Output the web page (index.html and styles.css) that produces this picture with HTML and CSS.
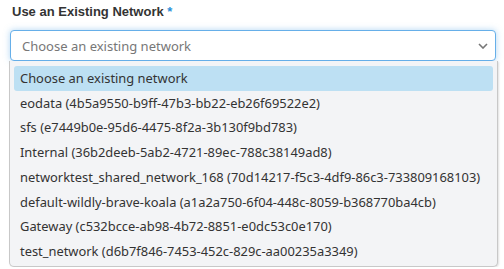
FILE: index.html
```html
<!DOCTYPE html>
<html>
<head>
<meta charset="utf-8">
<link rel="stylesheet" href="styles.css">
</head>
<body>
<div class="field">
  <label class="label">Use an Existing Network <span class="req">*</span></label>
  <div class="select">
    <span class="placeholder">Choose an existing network</span>
    <svg class="chev" width="10" height="6" viewBox="0 0 10 6"><path d="M1 1 L5 5 L9 1" fill="none" stroke="#777" stroke-width="1.6"/></svg>
  </div>
  <ul class="menu">
    <li class="item active">Choose an existing network</li>
    <li class="item">eodata (4b5a9550-b9ff-47b3-bb22-eb26f69522e2)</li>
    <li class="item">sfs (e7449b0e-95d6-4475-8f2a-3b130f9bd783)</li>
    <li class="item">Internal (36b2deeb-5ab2-4721-89ec-788c38149ad8)</li>
    <li class="item">networktest_shared_network_168 (70d14217-f5c3-4df9-86c3-733809168103)</li>
    <li class="item">default-wildly-brave-koala (a1a2a750-6f04-448c-8059-b368770ba4cb)</li>
    <li class="item">Gateway (c532bcce-ab98-4b72-8851-e0dc53c0e170)</li>
    <li class="item">test_network (d6b7f846-7453-452c-829c-aa00235a3349)</li>
  </ul>
</div>
</body>
</html>
```
FILE: styles.css
```css
html, body {
  margin: 0;
  padding: 0;
  background: #fff;
}
body {
  font-family: "Noto Sans", "Open Sans", sans-serif;
  color: #333;
}
.field {
  padding: 4px 8px 0 9px;
  display: flex;
  flex-direction: column;
}
.label {
  font-family: "Liberation Sans", Arial, sans-serif;
  font-weight: bold;
  font-size: 13px;
  line-height: 16px;
  color: #333;
  padding-left: 3px;
  margin-bottom: 10px;
}
.req {
  color: #2a8fd8;
}
.select {
  margin-left: 1px;
  height: 29px;
  border: 1px solid #66afe9;
  border-radius: 4px;
  box-shadow: 0 0 6px rgba(102, 175, 233, 0.5);
  display: flex;
  align-items: center;
  justify-content: space-between;
  padding: 0 7px 0 11px;
  background: #fff;
}
.placeholder {
  font-size: 13px;
  color: #777;
}
.chev {
  display: block;
}
.menu {
  list-style: none;
  margin: 0;
  padding: 5px 4px 2px 4px;
  background: #f3f4f6;
  border: 1px solid #c8c8c8;
  border-top: none;
  border-radius: 0 0 5px 5px;
  box-shadow: 1px 1px 2px rgba(0, 0, 0, 0.12);
  width: 479px;
}
.item {
  font-size: 12.9px;
  line-height: 16.7px;
  padding: 4px 6px;
  color: #333;
  border-radius: 3px;
  white-space: nowrap;
}
.item.active {
  background: #bde0f3;
}
```
